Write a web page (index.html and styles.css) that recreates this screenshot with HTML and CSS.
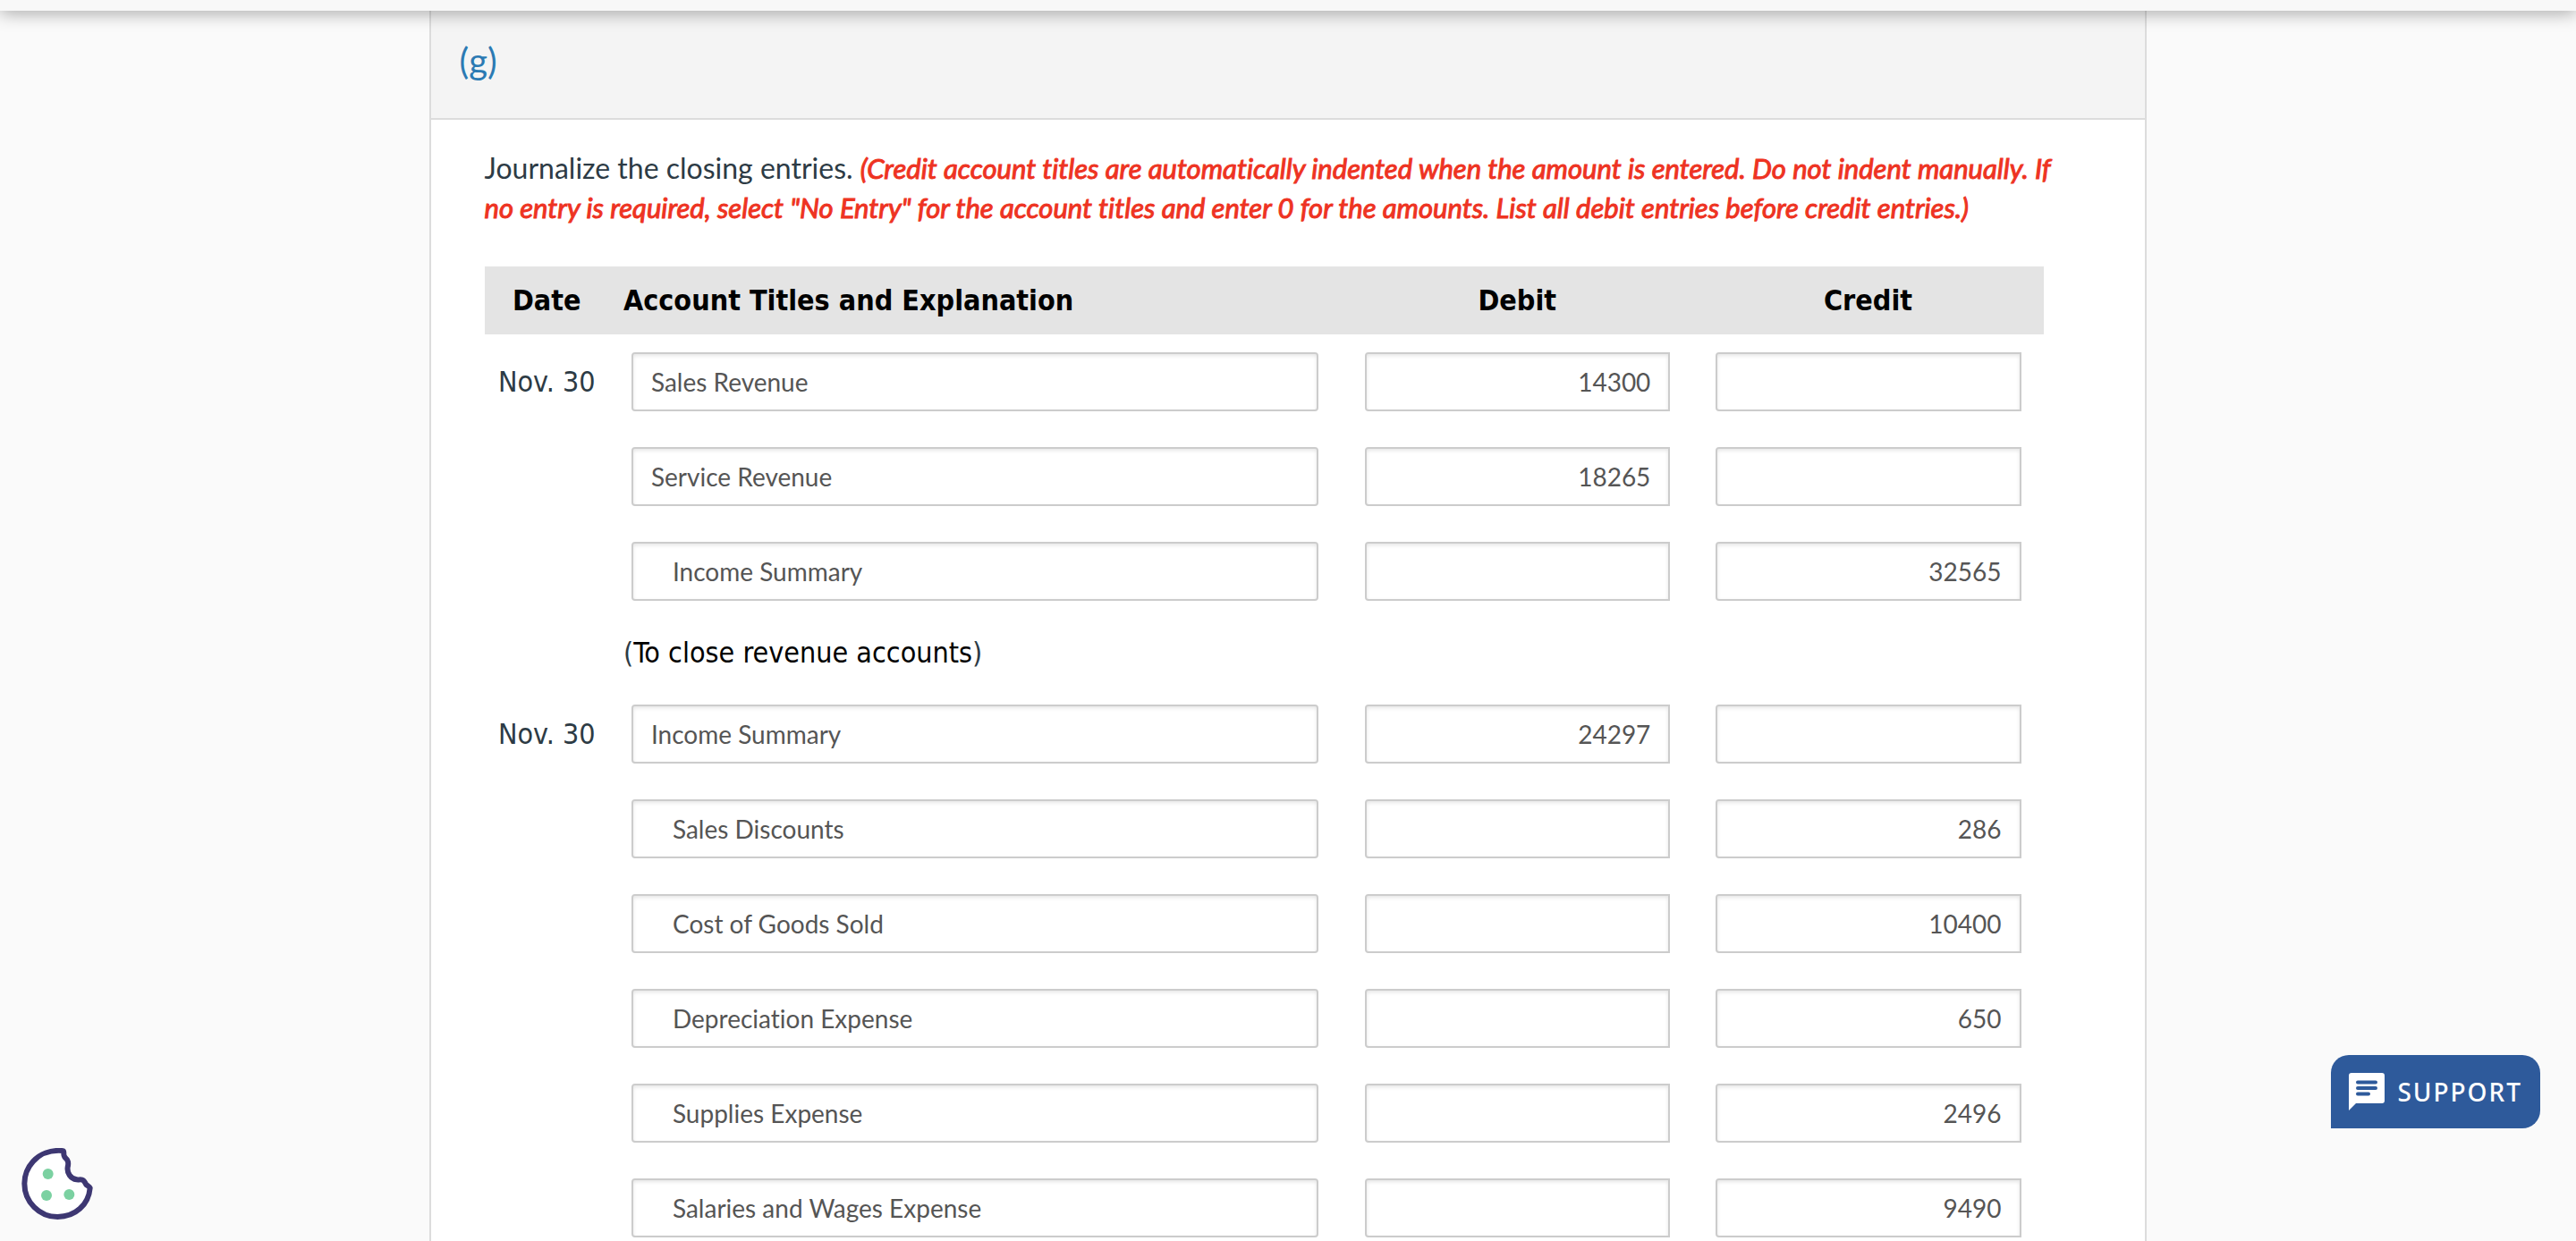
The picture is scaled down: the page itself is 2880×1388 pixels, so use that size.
FILE: index.html
```html
<!DOCTYPE html>
<html lang="en">
<head>
    <meta charset="UTF-8">
    <meta name="viewport" content="width=device-width, initial-scale=1.0">
    <title>Closing Entries</title>
    <link rel="stylesheet" href="styles.css">
</head>
<body>

    <header class="topbar"></header>

    <main class="panel">
        <div class="panel-header">
            <h2>(g)</h2>
        </div>

        <div class="panel-body">
            <p class="instructions">Journalize the closing entries. <em>(Credit account titles are automatically indented when the amount is entered. Do not indent manually. If no entry is required, select "No Entry" for the account titles and enter 0 for the amounts. List all debit entries before credit entries.)</em></p>

            <table class="journal">
                <thead>
                    <tr>
                        <th class="date">Date</th>
                        <th class="account">Account Titles and Explanation</th>
                        <th class="amount">Debit</th>
                        <th class="amount">Credit</th>
                    </tr>
                </thead>
                <tbody>
                    <!-- Revenue accounts -->
                    <tr>
                        <td class="date">Nov. 30</td>
                        <td class="account"><input type="text" aria-label="Account title 1" value="Sales Revenue"></td>
                        <td class="amount"><input type="text" aria-label="Debit 1" value="14300"></td>
                        <td class="amount"><input type="text" aria-label="Credit 1"></td>
                    </tr>
                    <tr>
                        <td class="date"></td>
                        <td class="account"><input type="text" aria-label="Account title 2" value="Service Revenue"></td>
                        <td class="amount"><input type="text" aria-label="Debit 2" value="18265"></td>
                        <td class="amount"><input type="text" aria-label="Credit 2"></td>
                    </tr>
                    <tr>
                        <td class="date"></td>
                        <td class="account"><input type="text" class="indent" aria-label="Account title 3" value="Income Summary"></td>
                        <td class="amount"><input type="text" aria-label="Debit 3"></td>
                        <td class="amount"><input type="text" aria-label="Credit 3" value="32565"></td>
                    </tr>
                    <tr class="note">
                        <td class="date"></td>
                        <td class="account" colspan="3">(<span>To close revenue accounts</span>)</td>
                    </tr>

                    <!-- Expense accounts -->
                    <tr>
                        <td class="date">Nov. 30</td>
                        <td class="account"><input type="text" aria-label="Account title 4" value="Income Summary"></td>
                        <td class="amount"><input type="text" aria-label="Debit 4" value="24297"></td>
                        <td class="amount"><input type="text" aria-label="Credit 4"></td>
                    </tr>
                    <tr>
                        <td class="date"></td>
                        <td class="account"><input type="text" class="indent" aria-label="Account title 5" value="Sales Discounts"></td>
                        <td class="amount"><input type="text" aria-label="Debit 5"></td>
                        <td class="amount"><input type="text" aria-label="Credit 5" value="286"></td>
                    </tr>
                    <tr>
                        <td class="date"></td>
                        <td class="account"><input type="text" class="indent" aria-label="Account title 6" value="Cost of Goods Sold"></td>
                        <td class="amount"><input type="text" aria-label="Debit 6"></td>
                        <td class="amount"><input type="text" aria-label="Credit 6" value="10400"></td>
                    </tr>
                    <tr>
                        <td class="date"></td>
                        <td class="account"><input type="text" class="indent" aria-label="Account title 7" value="Depreciation Expense"></td>
                        <td class="amount"><input type="text" aria-label="Debit 7"></td>
                        <td class="amount"><input type="text" aria-label="Credit 7" value="650"></td>
                    </tr>
                    <tr>
                        <td class="date"></td>
                        <td class="account"><input type="text" class="indent" aria-label="Account title 8" value="Supplies Expense"></td>
                        <td class="amount"><input type="text" aria-label="Debit 8"></td>
                        <td class="amount"><input type="text" aria-label="Credit 8" value="2496"></td>
                    </tr>
                    <tr>
                        <td class="date"></td>
                        <td class="account"><input type="text" class="indent" aria-label="Account title 9" value="Salaries and Wages Expense"></td>
                        <td class="amount"><input type="text" aria-label="Debit 9"></td>
                        <td class="amount"><input type="text" aria-label="Credit 9" value="9490"></td>
                    </tr>
                </tbody>
            </table>
        </div>
    </main>

    <button type="button" class="cookie-btn" aria-label="Cookie preferences">
        <svg viewBox="0 0 240 240" width="80" height="80">
            <path d="M137 9 C97 6 61 20 39 45 C19 67 10 91 10 119 C10 181 60 231 121 231 C181 231 225 190 230 134 C228 128 219 126 216 121 C213 117 211 108 204 107 C198 105 192 107 185 106 C165 103 152 84 155 64 C157 56 158 48 154 41 C151 35 145 33 143 26 C140 19 145 9 137 9 Z" fill="#fff" stroke="#3d3772" stroke-width="18" stroke-linejoin="round"/>
            <circle cx="89" cy="87" r="18" fill="#7bd1a1"/>
            <circle cx="84" cy="159" r="18" fill="#7bd1a1"/>
            <circle cx="160" cy="156" r="18" fill="#7bd1a1"/>
        </svg>
    </button>

    <button type="button" class="support-btn">
        <svg viewBox="0 0 40 42" width="40" height="42">
            <path d="M3 0 H37 Q40 0 40 3 V31 Q40 34 37 34 H8 L0 42 V3 Q0 0 3 0 Z" fill="#fff"/>
            <path d="M10 10.500 H30 M10 17 H30 M10 23.500 H22" stroke="#2e5a9b" stroke-width="4" stroke-linecap="round"/>
        </svg>
        SUPPORT
    </button>

</body>
</html>
```

FILE: styles.css
```css
* {
    box-sizing: border-box;
}
body {
    font-family: Lato, sans-serif;
    font-size: 32px;
    line-height: 44px;
    font-variant-ligatures: none;
    color: #2d3b45;
    background-color: #fafafa;
    height: 100vh;
    margin: 0;
    overflow: hidden;
}
.topbar {
    position: relative;
    z-index: 1;
    height: 12px;
    background-color: #f8f8f8;
    box-shadow: 0 0 20px rgba(0, 0, 0, 0.5);
}
.panel {
    width: 66.7%;
    margin: 0 auto;
    background-color: #fff;
    border: 2px solid #dcdcdc;
    border-top: none;
}
.panel-header {
    padding: 34px 32px 42px;
    background-color: #f4f4f4;
    border-bottom: 2px solid #dcdcdc;
}
.panel-header h2 {
    margin: 0;
    font-size: 40px;
    font-weight: normal;
    line-height: 44px;
    color: #2b7ab3;
}
.panel-body {
    padding: 32px 60px;
}
.instructions {
    margin: 0 0 44px;
    padding-right: 20px;
}
.instructions em {
    font-size: 31px;
    color: #ee3322;
    -webkit-text-stroke: 1px #ee3322;
}
.journal {
    width: 97%;
    table-layout: fixed;
    border-collapse: collapse;
    font-family: "DejaVu Sans Condensed", "DejaVu Sans", sans-serif;
}
.journal th {
    height: 76px;
    padding: 0;
    color: #000;
    background-color: #e4e4e4;
}
.journal td {
    padding: 20px 0;
}
.journal .date {
    width: 8%;
    text-align: center;
}
.journal .account {
    width: 47%;
    padding-left: 16px;
    padding-right: 26px;
    text-align: left;
}
.journal td.amount {
    padding-left: 26px;
    padding-right: 25px;
}
.journal .note td {
    height: 76px;
    padding-top: 0;
    padding-bottom: 0;
}
.note span {
    color: #000;
}
.journal input {
    display: block;
    width: 100%;
    height: 66px;
    padding: 0 20px;
    border: 2px solid #ccc;
    border-radius: 4px;
    box-shadow: inset 0 2px 4px rgba(0, 0, 0, 0.1);
    background-color: #fff;
    color: #555;
    font-family: Lato, sans-serif;
    font-size: 28px;
    font-variant-ligatures: none;
}
.journal td.account:not([colspan]) {
    padding-left: 25px;
}
.journal .amount input {
    border-radius: 4px 0 0 4px;
    text-align: right;
}
.journal input.indent {
    padding-left: 44px;
}
.cookie-btn {
    position: fixed;
    left: 24px;
    bottom: 24px;
    padding: 0;
    border: none;
    background: none;
    cursor: pointer;
}
.cookie-btn svg {
    display: block;
}
.support-btn {
    position: fixed;
    right: 40px;
    bottom: 126px;
    display: flex;
    align-items: center;
    gap: 14px;
    height: 82px;
    padding: 0 20px;
    border: none;
    border-radius: 20px 20px 20px 0;
    background-color: #2e5a9b;
    color: #fff;
    font-family: "Noto Sans", sans-serif;
    font-size: 28px;
    font-weight: 500;
    letter-spacing: 2px;
    cursor: pointer;
}
```
